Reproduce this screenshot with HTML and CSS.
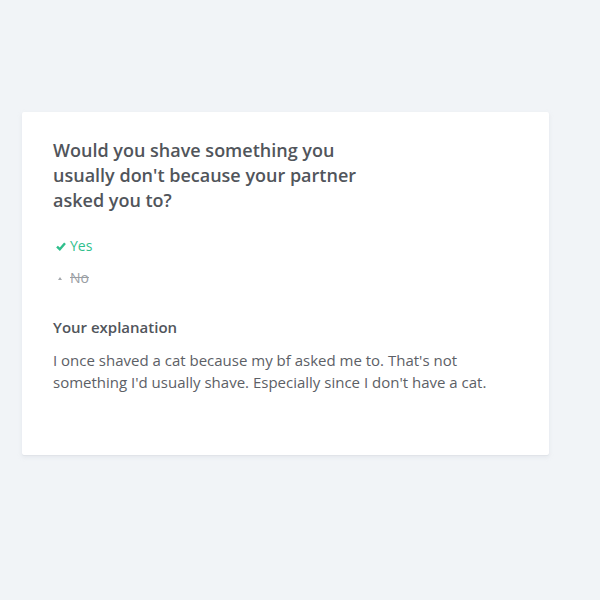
FILE: index.html
```html
<!DOCTYPE html>
<html>
<head>
<meta charset="utf-8">
<link rel="stylesheet" href="styles.css">
</head>
<body>
<div class="page">
  <div class="card">
    <h2 class="question">Would you shave something you<br>usually don't because your partner<br>asked you to?</h2>
    <ul class="answers">
      <li class="answer yes"><svg class="check" width="10" height="9" viewBox="0 0 10 9"><path d="M1 4.6 L3.8 7.2 L9 1.3" fill="none" stroke="#2fbf8c" stroke-width="2.4"/></svg>Yes</li>
      <li class="answer no"><span class="dot"></span><span class="strike">No</span></li>
    </ul>
    <h3 class="label">Your explanation</h3>
    <p class="explain">I once shaved a cat because my bf asked me to. That's not<br>something I'd usually shave. Especially since I don't have a cat.</p>
  </div>
</div>
</body>
</html>
```

FILE: styles.css
```css
html, body {
  margin: 0;
  padding: 0;
  background: #f1f4f7;
}
body {
  font-family: "Open Sans", "Noto Sans", sans-serif;
  width: 600px;
  height: 600px;
}
.page {
  padding: 112px 51px 0 22px;
}
.card {
  background: #ffffff;
  width: 527px;
  height: 343px;
  box-sizing: border-box;
  padding: 26px 31px 0 31px;
  box-shadow: 0 1px 0 #e1e4e9, 0 2px 4px rgba(200, 206, 214, 0.35);
  border-radius: 2px;
}
.question {
  margin: 0;
  font-size: 18px;
  font-weight: 600;
  line-height: 25px;
  color: #51555b;
}
.answers {
  list-style: none;
  margin: 23px 0 0 0;
  padding: 0 0 0 3px;
}
.answer {
  font-size: 14px;
  line-height: 20px;
  display: flex;
  align-items: center;
}
.yes {
  color: #30bf8d;
}
.check {
  margin-right: 4px;
}
.no {
  margin-top: 12px;
  color: #9a9ea4;
}
.dot {
  width: 0;
  height: 0;
  border-left: 2.5px solid transparent;
  border-right: 2.5px solid transparent;
  border-bottom: 3px solid #a5a9ae;
  margin: 0 8px 0 2px;
}
.strike {
  text-decoration: line-through;
}
.label {
  margin: 28px 0 0 0;
  font-size: 15px;
  font-weight: 600;
  line-height: 22px;
  color: #51555b;
}
.explain {
  margin: 11px 0 0 0;
  font-size: 15px;
  line-height: 22px;
  color: #5c6066;
}
```
